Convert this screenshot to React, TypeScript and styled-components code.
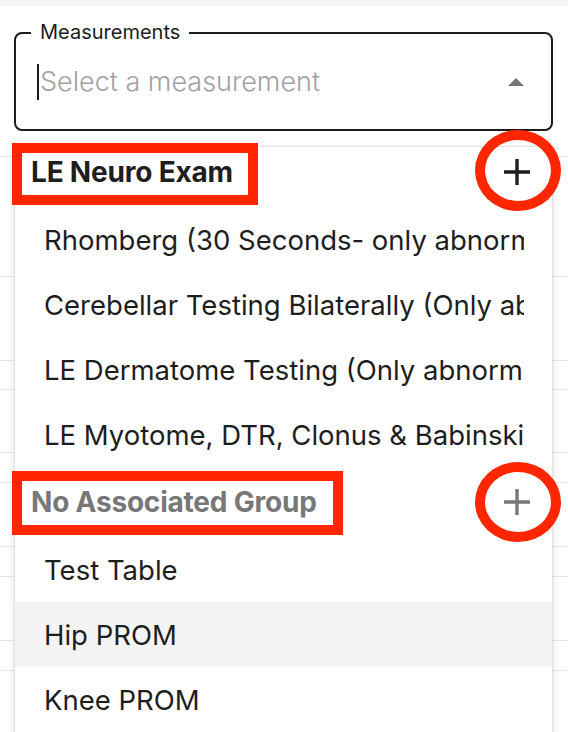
import styled, { createGlobalStyle } from 'styled-components';

type Group = {
    label: string;
    muted?: boolean;
    options: string[];
};

const groups: Group[] = [
    {
        label: 'LE Neuro Exam',
        options: [
            'Rhomberg (30 Seconds- only abnormal findings)',
            'Cerebellar Testing Bilaterally (Only abnormal findings)',
            'LE Dermatome Testing (Only abnormal findings)',
            'LE Myotome, DTR, Clonus & Babinski',
        ],
    },
    {
        label: 'No Associated Group',
        muted: true,
        options: ['Test Table', 'Hip PROM', 'Knee PROM'],
    },
];

// rows of the table that sits behind the open menu
const backdropRows = [26, 120, 84, 29, 63, 30, 64, 30, 64, 30, 64];

const GlobalStyle = createGlobalStyle`
    html, body {
        margin: 0;
        padding: 0;
        background: #ffffff;
    }
    body {
        font-family: Inter, 'Noto Sans', 'Liberation Sans', sans-serif;
        color: #1e1e1e;
    }
`;

const Page = styled.div`
    position: relative;
    width: 568px;
    height: 732px;
    overflow: hidden;
    background: #ffffff;
`;

const TopBand = styled.div`
    height: 6px;
    background: #f5f5f5;
`;

const Field = styled.div`
    position: relative;
    box-sizing: border-box;
    height: 99px;
    margin: 26px 15px 0 14px;
    padding: 0 27px 0 21px;
    display: flex;
    align-items: center;
    border: 2px solid #1c1c1c;
    border-radius: 8px;
`;

const FieldLabel = styled.span`
    position: absolute;
    top: -14px;
    left: 15px;
    padding: 0 9px;
    background: #ffffff;
    font-size: 20px;
    line-height: 24px;
    color: #1c1c1c;
`;

const Caret = styled.span`
    width: 2px;
    height: 36px;
    margin-right: 1px;
    background: #1c1c1c;
`;

const Placeholder = styled.span`
    flex: 1;
    font-size: 27px;
    font-weight: 300;
    color: #a2a2a2;
`;

const ArrowUp = styled.span`
    width: 0;
    height: 0;
    border-left: 8px solid transparent;
    border-right: 8px solid transparent;
    border-bottom: 8px solid #767676;
`;

const Backdrop = styled.div`
    display: flex;
    flex-direction: column;
`;

const BackdropRow = styled.div<{ $height: number }>`
    box-sizing: border-box;
    height: ${(p) => p.$height}px;
    border-bottom: 1px solid #e6e6e6;
`;

const Menu = styled.div`
    position: absolute;
    top: 146px;
    left: 14px;
    width: 539px;
    bottom: -20px;
    box-sizing: border-box;
    border: 1px solid #e2e2e2;
    background: #ffffff;
    box-shadow: 0 2px 6px rgba(0, 0, 0, 0.14);
    overflow: hidden;
`;

const MenuList = styled.ul`
    list-style: none;
    margin: -10px 0 0;
    padding: 0;
`;

const GroupList = styled.ul`
    list-style: none;
    margin: 0;
    padding: 0;
`;

const GroupHeader = styled.li<{ $muted?: boolean }>`
    height: 70px;
    display: flex;
    align-items: center;
    justify-content: space-between;
    padding: 0 21px 0 16px;
    font-size: 28px;
    font-weight: 700;
    letter-spacing: -0.2px;
    color: ${(p) => (p.$muted ? '#777777' : '#1e1e1e')};
`;

const Option = styled.li<{ $active?: boolean }>`
    height: 65px;
    display: flex;
    align-items: center;
    padding: 0 28px 0 29px;
    background: ${(p) => (p.$active ? '#f4f4f4' : 'transparent')};
`;

const OptionText = styled.span`
    flex: 1;
    min-width: 0;
    overflow: hidden;
    white-space: nowrap;
    font-size: 27.5px;
    color: #1e1e1e;
`;

const PlusIcon = ({ color }: { color: string }) => (
    <svg width="28" height="28" viewBox="0 0 28 28" fill="none">
        <path d="M1 14H27M14 1V27" stroke={color} strokeWidth="3.4" />
    </svg>
);

const RedBox = styled.div<{ $x: number; $y: number; $w: number; $h: number }>`
    position: absolute;
    left: ${(p) => p.$x}px;
    top: ${(p) => p.$y}px;
    width: ${(p) => p.$w}px;
    height: ${(p) => p.$h}px;
    box-sizing: border-box;
    border: 10px solid #ff2600;
    pointer-events: none;
`;

const RedRing = styled(RedBox)`
    border-radius: 50%;
`;

export default function App() {
    return (
        <>
            <GlobalStyle />
            <Page>
                <TopBand />
                <Field>
                    <FieldLabel>Measurements</FieldLabel>
                    <Caret />
                    <Placeholder>Select a measurement</Placeholder>
                    <ArrowUp />
                </Field>
                <Backdrop>
                    {backdropRows.map((h, i) => (
                        <BackdropRow key={i} $height={h} />
                    ))}
                </Backdrop>

                <Menu>
                    <MenuList>
                        {groups.map((group) => (
                            <li key={group.label}>
                                <GroupList>
                                    <GroupHeader $muted={group.muted}>
                                        {group.label}
                                        <PlusIcon color={group.muted ? '#777777' : '#1e1e1e'} />
                                    </GroupHeader>
                                    {group.options.map((opt) => (
                                        <Option key={opt} $active={opt === 'Hip PROM'}>
                                            <OptionText>{opt}</OptionText>
                                        </Option>
                                    ))}
                                </GroupList>
                            </li>
                        ))}
                    </MenuList>
                </Menu>

                <RedBox $x={12} $y={143} $w={246} $h={62} />
                <RedRing $x={475} $y={130} $w={86} $h={81} />
                <RedBox $x={12} $y={471} $w={331} $h={64} />
                <RedRing $x={475} $y={462} $w={86} $h={80} />
            </Page>
        </>
    );
}
